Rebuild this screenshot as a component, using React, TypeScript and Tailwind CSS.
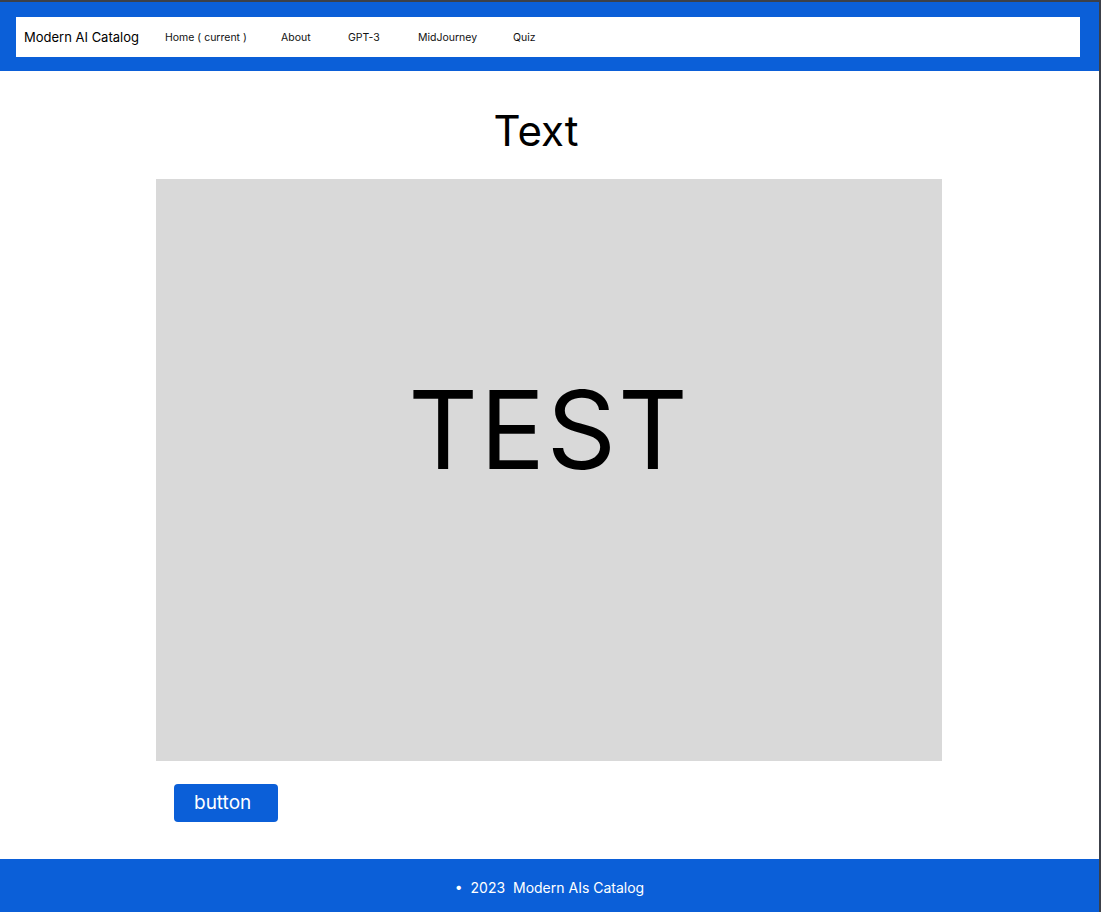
import React from 'react';

const navItems = [
  { label: 'Home ( current )', w: 'w-[116px]' },
  { label: 'About', w: 'w-[67px]' },
  { label: 'GPT-3', w: 'w-[70px]' },
  { label: 'MidJourney', w: 'w-[95px]' },
  { label: 'Quiz', w: 'w-[40px]' },
];

export default function App() {
  return (
    <div className="h-[912px] w-[1101px] flex flex-col bg-white border-t-2 border-r-2 border-[#3c4049] font-['Inter',sans-serif] text-black overflow-hidden">
      {/* Header */}
      <header className="bg-[#0b5fd8] pt-[15px] pb-[14px] pl-4 pr-[19px]">
        <nav className="h-10 bg-white flex items-center pl-2">
          <span className="w-[141px] text-[13px] leading-none">Modern AI Catalog</span>
          <div className="flex items-center pt-[2px]">
            {navItems.map((item) => (
              <span key={item.label} className={`${item.w} text-[10.5px] leading-none text-[#111]`}>
                {item.label}
              </span>
            ))}
          </div>
        </nav>
      </header>

      {/* Main */}
      <main className="flex-1 flex flex-col">
        <h1 className="mt-[33px] pr-[27px] text-center text-[42px] leading-[53px] font-normal">Text</h1>
        <div className="mt-[22px] ml-[156px] w-[786px] h-[582px] bg-[#d9d9d9] flex justify-center pt-[182px]">
          <span className="text-[108px] leading-[138px] tracking-[2px] h-fit">TEST</span>
        </div>
        <button className="mt-[23px] ml-[174px] w-[104px] h-[38px] rounded-[4px] bg-[#0b5fd8] text-white text-[19px] text-left pl-5">
          button
        </button>
      </main>

      {/* Footer */}
      <footer className="h-[53px] bg-[#0b5fd8] flex items-center justify-center pt-[3px] text-white text-[14px]">
        <span>•&nbsp; 2023&nbsp; Modern AIs Catalog</span>
      </footer>
    </div>
  );
}
